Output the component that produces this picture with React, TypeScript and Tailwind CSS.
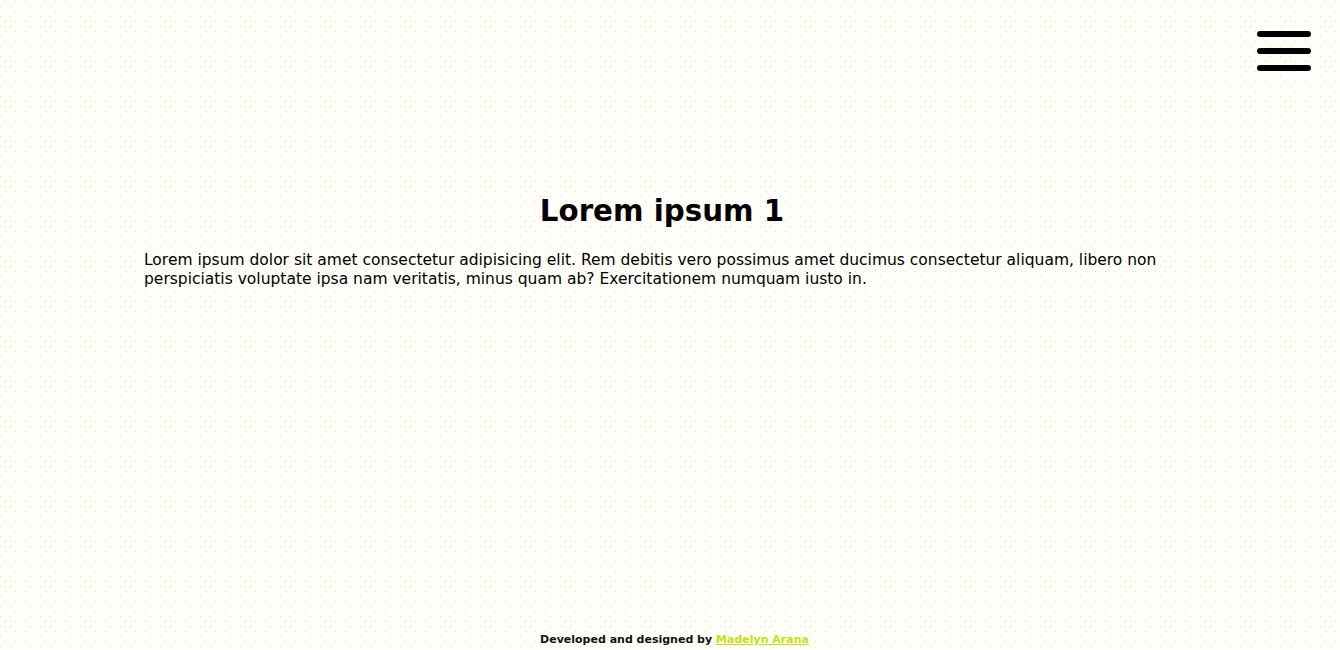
import React from "react";

export default function App() {
  return (
    <div
      className="relative w-full h-[650px] overflow-hidden bg-[#fffffd] [background-image:radial-gradient(circle_at_0.5px_0.5px,#f6e94c_0.55px,transparent_0.75px),radial-gradient(circle_at_0.5px_0.5px,#f6e94c_0.55px,transparent_0.75px)] [background-size:10px_10px] [background-position:5px_1px,0px_6px] flex flex-col text-black"
      style={{ fontFamily: '"DejaVu Sans", "Liberation Sans", sans-serif' }}
    >
      <button className="absolute top-[31px] left-[1257px] w-[54px] flex flex-col gap-[11px]" aria-label="menu">
        <span className="block h-[6px] w-full rounded-full bg-black" />
        <span className="block h-[6px] w-full rounded-full bg-black" />
        <span className="block h-[6px] w-full rounded-full bg-black" />
      </button>
      <main className="flex-1 pt-[193px] pl-[144px] w-[1180px]">
        <h1 className="text-center text-[29.3px] leading-[36px] font-bold">Lorem ipsum 1</h1>
        <p className="mt-[22px] text-[15.5px] leading-[19px]">
          Lorem ipsum dolor sit amet consectetur adipisicing elit. Rem debitis vero possimus amet ducimus consectetur aliquam, libero non perspiciatis voluptate ipsa nam veritatis, minus quam ab? Exercitationem numquam iusto in.
        </p>
      </main>
      <footer className="text-center text-[11px] leading-[16px] font-bold pb-[2px] pl-[9px] text-[#111]">
        Developed and designed by{" "}
        <a href="#" className="text-[#c5e00f] underline">Madelyn Arana</a>
      </footer>
    </div>
  );
}
